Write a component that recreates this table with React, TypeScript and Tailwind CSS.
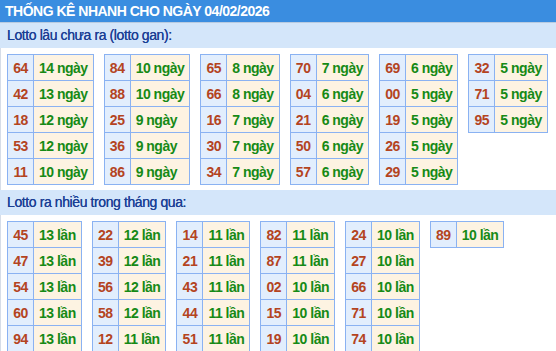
const gan: [string, string][][] = [
  [["64", "14 ngày"], ["42", "13 ngày"], ["18", "12 ngày"], ["53", "12 ngày"], ["11", "10 ngày"]],
  [["84", "10 ngày"], ["88", "10 ngày"], ["25", "9 ngày"], ["36", "9 ngày"], ["86", "9 ngày"]],
  [["65", "8 ngày"], ["66", "8 ngày"], ["16", "7 ngày"], ["30", "7 ngày"], ["34", "7 ngày"]],
  [["70", "7 ngày"], ["04", "6 ngày"], ["21", "6 ngày"], ["50", "6 ngày"], ["57", "6 ngày"]],
  [["69", "6 ngày"], ["00", "5 ngày"], ["19", "5 ngày"], ["26", "5 ngày"], ["29", "5 ngày"]],
  [["32", "5 ngày"], ["71", "5 ngày"], ["95", "5 ngày"]],
];

const nhieu: [string, string][][] = [
  [["45", "13 lần"], ["47", "13 lần"], ["54", "13 lần"], ["60", "13 lần"], ["94", "13 lần"]],
  [["22", "12 lần"], ["39", "12 lần"], ["56", "12 lần"], ["58", "12 lần"], ["12", "11 lần"]],
  [["14", "11 lần"], ["21", "11 lần"], ["43", "11 lần"], ["44", "11 lần"], ["51", "11 lần"]],
  [["82", "11 lần"], ["87", "11 lần"], ["02", "10 lần"], ["15", "10 lần"], ["19", "10 lần"]],
  [["24", "10 lần"], ["27", "10 lần"], ["66", "10 lần"], ["71", "10 lần"], ["74", "10 lần"]],
  [["89", "10 lần"]],
];

function NumTable({ rows }: { rows: [string, string][] }) {
  return (
    <table className="border-collapse border border-[#8ab2f2] text-[14px] leading-none font-bold tracking-[-0.5px]">
      <tbody>
        {rows.map(([num, val]) => (
          <tr key={num} className="h-[26px]">
            <td className="w-[26px] border border-[#8ab2f2] bg-[#e2eefd] p-0 text-center text-[#b4441f]">{num}</td>
            <td className="border border-[#8ab2f2] bg-[#fdf3e2] px-[5px] py-0 text-[#168a16]">{val}</td>
          </tr>
        ))}
      </tbody>
    </table>
  );
}

function Section({ title, tables }: { title: string; tables: [string, string][][] }) {
  return (
    <div>
      <div className="flex h-[25px] items-center bg-[#d4e6fa] pl-[7px] text-[14px] tracking-[-0.4px] text-[#1c3f94] [text-shadow:0_0_0.4px_#1c3f94]">
        {title}
      </div>
      <div className="flex flex-nowrap items-start gap-x-[10px] border-l border-[#d6dde8] pt-[6px] pb-[5px] pl-[6px]">
        {tables.map((t, i) => (
          <NumTable key={i} rows={t} />
        ))}
      </div>
    </div>
  );
}

export default function App() {
  return (
    <div className="h-[351px] w-[556px] overflow-hidden bg-white font-['Liberation_Sans',Arial,sans-serif]">
      <div className="flex h-[23px] items-center border-b border-[#b9cbe0] bg-[#3a8de0] pl-[5px] text-[14px] font-bold tracking-[-0.5px] text-white">
        THỐNG KÊ NHANH CHO NGÀY 04/02/2026
      </div>
      <Section title="Lotto lâu chưa ra (lotto gan):" tables={gan} />
      <Section title="Lotto ra nhiều trong tháng qua:" tables={nhieu} />
    </div>
  );
}
